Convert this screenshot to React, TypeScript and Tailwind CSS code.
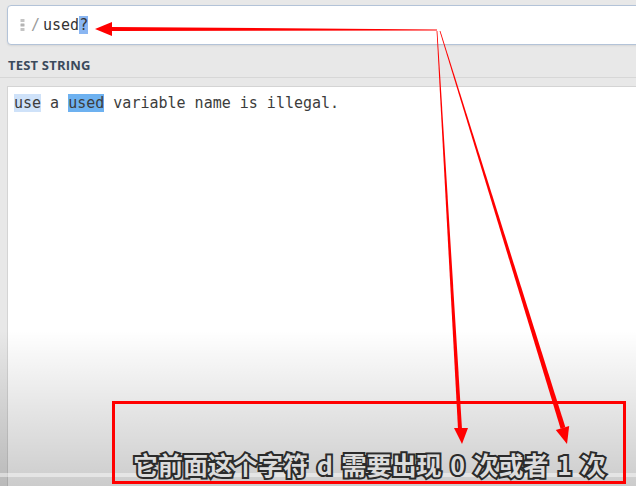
import React from 'react';

const mono = 'font-["DejaVu_Sans_Mono","Liberation_Mono",monospace]';

const DragDots = () => (
  <svg width="5" height="12" viewBox="0 0 5 12" className="mr-[6px]">
    <rect x="0.5" y="0" width="4" height="3" rx="0.5" fill="#c4c4c4" />
    <rect x="0.5" y="4.5" width="4" height="3" rx="0.5" fill="#b4b4b4" />
    <rect x="0.5" y="9" width="4" height="3" rx="0.5" fill="#c4c4c4" />
  </svg>
);

const Arrows = () => (
  <svg
    className="absolute inset-0 pointer-events-none"
    width="636"
    height="486"
    viewBox="0 0 636 486"
  >
    {/* horizontal arrow to the quantifier */}
    <polygon points="437,29.5 437,30.5 112,31 112,27" fill="#ff0000" />
    <polygon points="112,22 112,36 95,29" fill="#ff0000" />
    {/* down to "0" */}
    <polygon points="436.6,31 437.4,31 462,429 458,429" fill="#ff0000" />
    <polygon points="454,428 468,428 462,444" fill="#ff0000" />
    {/* down to "1" */}
    <polygon points="440.4,30.9 439.6,31.1 560.6,428.7 565.4,427.3" fill="#ff0000" />
    <polygon points="569.2,425.9 555.8,430.1 567,444" fill="#ff0000" />
  </svg>
);

export default function App() {
  return (
    <div className="relative w-[636px] h-[486px] overflow-hidden bg-[#e8e8e8] flex flex-col font-['Open_Sans',sans-serif]">
      {/* regex input */}
      <div className="pl-[7px] pt-[5px] shrink-0">
        <div className="h-[40px] w-[660px] bg-white border border-[#b3c3d8] rounded-[4px] flex items-center pl-[12px] shadow-[0_1px_2px_rgba(0,0,0,0.08)]">
          <DragDots />
          <span className={`${mono} text-[15px] text-[#9a9a9a] mr-[3px]`}>/</span>
          <span className={`${mono} text-[15px] text-[#333]`}>used</span>
          <span className={`${mono} text-[15px] text-[#333] bg-[#8ab6f2] leading-[18px]`}>?</span>
        </div>
      </div>

      {/* section header */}
      <div className="h-[33px] shrink-0 flex items-center px-[8px] border-b border-[#d7d7d7]">
        <span className="text-[13px] font-bold text-[#3b4a5c] tracking-[0.2px] mt-[9px]">TEST STRING</span>
      </div>

      {/* test string panel */}
      <div className="flex-1 ml-[7px] mt-[8px] bg-white border-l border-t border-[#d4d4d4]">
        <div className={`${mono} text-[15px] text-[#3c3c3c] pl-[6px] pt-[6px] leading-[21px] whitespace-pre`}>
          <span className="bg-[#cfe2f9]">use</span>
          {' a '}
          <span className="bg-[#6db1f0]">used</span>
          {' variable name is illegal.'}
        </div>
      </div>

      {/* video shading */}
      <div className="absolute left-0 right-0 top-[330px] bottom-0 bg-linear-to-b from-black/0 to-black/20 pointer-events-none" />
      <div className="absolute left-0 right-0 top-[473px] h-[4px] bg-white/45 pointer-events-none" />

      {/* annotation box */}
      <div className="absolute left-[112px] top-[401px] w-[514px] h-[83px] border-[3px] border-[#ff0000]" />

      {/* subtitle */}
      <div className="absolute left-[133px] top-[449px] whitespace-pre text-[25px] leading-[30px] font-bold text-[#dcdcdc] font-['Noto_Sans_CJK_SC',sans-serif] [word-spacing:3px] [-webkit-text-stroke:4px_#2b2b2b] [paint-order:stroke_fill]">
        它前面这个字符 d 需要出现 0 次或者 1 次
      </div>

      <Arrows />
    </div>
  );
}
